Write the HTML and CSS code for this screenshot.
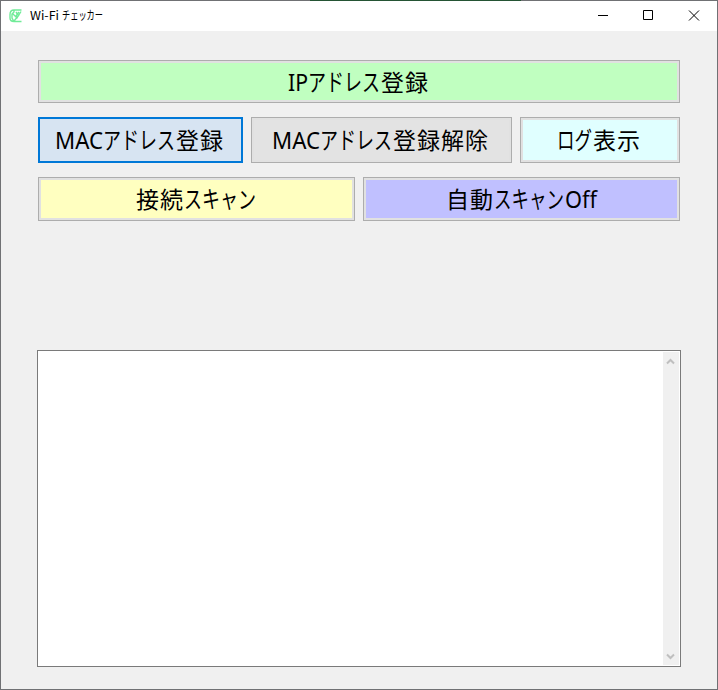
FILE: index.html
```html
<!DOCTYPE html>
<html lang="ja">
<head>
<meta charset="utf-8">
<title>Wi-Fi チェッカー</title>
<link rel="stylesheet" href="styles.css">
</head>
<body>
<div class="window">
  <header class="titlebar">
    <svg class="app-icon" width="16" height="16" viewBox="0 0 16 16"><path d="M13.500 2H6Q2 2 2 6.500v3.500q0 3.500 4 3.500h7.500M6 2v2L4 6v4l2 3.500M5 6l4 4 4-6.500M8 4l2 3M11 4l-3 4M6 13l5-6"/></svg>
    <svg class="title" width="78" height="20"><text x="0" y="14" textLength="29" lengthAdjust="spacingAndGlyphs">Wi-Fi</text><text x="32" y="14" textLength="41" lengthAdjust="spacingAndGlyphs">チェッカー</text></svg>
    <svg class="controls" width="138" height="30" viewBox="0 0 138 30"><path d="M19 14.500h10M64.500 9.500h9v9h-9zM110 9.500l10 10M120 9.500l-10 10"/></svg>
  </header>
  <main class="content">
    <div class="row first">
      <button class="btn green"><svg width="142" height="32"><text x="0" y="25" class="latin" textLength="20" lengthAdjust="spacingAndGlyphs">IP</text><text x="20" y="25" class="kana" textLength="72" lengthAdjust="spacingAndGlyphs">アドレス</text><text x="93" y="25" textLength="47">登録</text></svg></button>
    </div>
    <div class="row second">
      <button class="btn focus"><svg width="172" height="32"><text x="0" y="25" class="latin" textLength="48" lengthAdjust="spacingAndGlyphs">MAC</text><text x="48" y="25" class="kana" textLength="72" lengthAdjust="spacingAndGlyphs">アドレス</text><text x="121" y="25" textLength="47">登録</text></svg></button>
      <button class="btn gray"><svg width="220" height="32"><text x="0" y="25" class="latin" textLength="48" lengthAdjust="spacingAndGlyphs">MAC</text><text x="48" y="25" class="kana" textLength="72" lengthAdjust="spacingAndGlyphs">アドレス</text><text x="121" y="25" textLength="95">登録解除</text></svg></button>
      <button class="btn cyan"><svg width="86" height="32"><text x="0" y="25" class="kana" textLength="35" lengthAdjust="spacingAndGlyphs">ログ</text><text x="36" y="25" textLength="47">表示</text></svg></button>
    </div>
    <div class="row third">
      <button class="btn yellow"><svg width="122" height="32"><text x="0" y="25" textLength="47">接続</text><text x="48" y="25" class="kana" textLength="72" lengthAdjust="spacingAndGlyphs">スキャン</text></svg></button>
      <button class="btn violet"><svg width="151" height="32"><text x="0" y="25" textLength="47">自動</text><text x="48" y="25" class="kana" textLength="70" lengthAdjust="spacingAndGlyphs">スキャン</text><text x="119" y="25" class="latin" textLength="32" lengthAdjust="spacingAndGlyphs">Off</text></svg></button>
    </div>
    <div class="log">
      <div class="scrollbar">
        <svg width="16" height="17"><path d="M4 11.500L7.500 8l3.500 3.500"/></svg>
        <svg width="16" height="17"><path d="M4 6.500L7.500 10l3.500-3.500"/></svg>
      </div>
    </div>
  </main>
</div>
</body>
</html>
```
FILE: styles.css
```css
* { box-sizing: border-box; }
body { margin: 0; background: #f0f0f0; font-family: "Noto Sans CJK JP", sans-serif; }
svg { display: block; flex: none; overflow: visible; }
.window { width: 718px; height: 690px; padding: 1px; display: flex; flex-direction: column;
  background: linear-gradient(90deg, transparent 310px, #245434 310px, #245434 521px, transparent 521px) 0 0 / 100% 1px no-repeat #707174; }
.titlebar { height: 30px; flex: none; display: flex; align-items: center; background: #fff; padding-left: 7px; }
.app-icon { fill: none; stroke: #70eb98; stroke-width: 1.4; }
.title { margin-left: 6px; font-size: 12px; }
.controls { margin-left: auto; fill: none; stroke: #000; stroke-width: 1; }
.content { flex: 1; background: #f0f0f0; padding: 29px 36px 0 37px; }
.row { display: grid; gap: 8px; width: 642px; }
.first { height: 43px; }
.second { height: 46px; margin-top: 14px; grid-template-columns: 205px 261px 160px; }
.third { height: 44px; margin-top: 14px; grid-template-columns: 317px 317px; }
.btn { display: flex; align-items: center; justify-content: center; margin: 0; padding: 0; min-width: 0; border: 1px solid #adadad; box-shadow: inset 0 0 0 2px #e1e1e1; font: 23px "Noto Sans CJK JP", sans-serif; color: #000; border-radius: 0; }
.btn text { fill: #000; }
.btn .kana { font-size: 24px; }
.btn .latin { font-family: "Noto Sans", sans-serif; font-size: 23px; }
.green { background: #c0ffc0; }
.focus { background: #d7e4f2; border: 2px solid #0078d7; box-shadow: none; }
.gray { background: #e3e3e3; }
.cyan { background: #e0ffff; }
.yellow { background: #ffffc0; }
.violet { background: #c0c0ff; }
.log { width: 644px; height: 317px; margin: 129px 0 0 -1px; border: 1px solid #7a7a7a; background: #fff; padding: 1px; display: flex; justify-content: flex-end; }
.scrollbar { width: 16px; background: #f0f0f0; display: flex; flex-direction: column; justify-content: space-between; }
.scrollbar path { fill: none; stroke: #bfbfbf; stroke-width: 2; }
```
